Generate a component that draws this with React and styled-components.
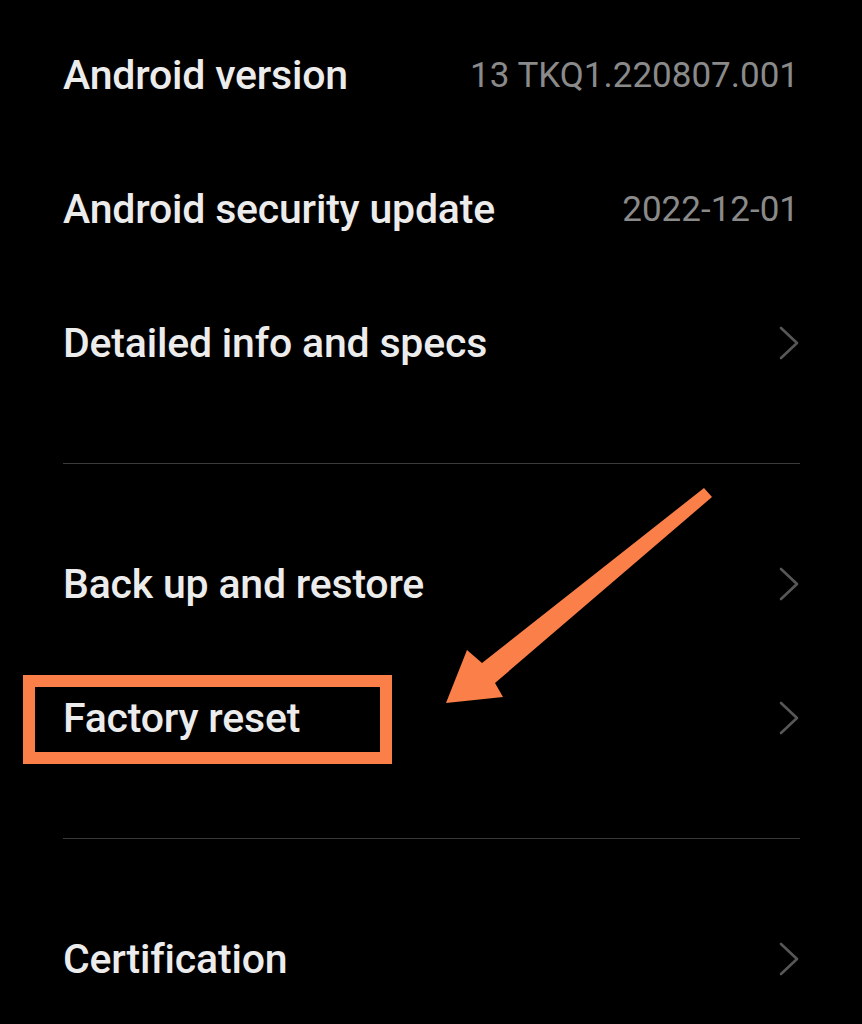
import React from "react";
import styled, { createGlobalStyle } from "styled-components";

const GlobalStyle = createGlobalStyle`
  html, body {
    margin: 0;
    padding: 0;
    background: #000;
  }
  body {
    font-family: Roboto, "Noto Sans", "Liberation Sans", sans-serif;
  }
`;

const sections = [
  [
    { label: "Android version", value: "13 TKQ1.220807.001" },
    { label: "Android security update", value: "2022-12-01" },
    { label: "Detailed info and specs", chevron: true },
  ],
  [
    { label: "Back up and restore", chevron: true },
    { label: "Factory reset", chevron: true },
  ],
  [{ label: "Certification", chevron: true }],
];

function Chevron() {
  return (
    <ChevronSvg width="20" height="34" viewBox="0 0 20 34">
      <polyline
        points="2,2 18,17 2,32"
        fill="none"
        stroke="#575757"
        strokeWidth="2.6"
        strokeLinecap="round"
        strokeLinejoin="round"
      />
    </ChevronSvg>
  );
}

function App() {
  return (
    <>
      <GlobalStyle />
      <Page>
        {sections.map((rows, i) => (
          <Section key={i} $first={i === 0}>
            {rows.map((row) => (
              <Row key={row.label}>
                <Label>{row.label}</Label>
                {row.value && <Value>{row.value}</Value>}
                {row.chevron && <Chevron />}
              </Row>
            ))}
          </Section>
        ))}

        <Highlight />
        <Arrow width="862" height="1024" viewBox="0 0 862 1024">
          <polygon
            points="704,488 712,497 495,683 503,697 446,703 467,650 482,663"
            fill="#fb7f48"
          />
        </Arrow>
      </Page>
    </>
  );
}

export default App;

const Page = styled.div`
  position: relative;
  width: 862px;
  height: 1024px;
  overflow: hidden;
  box-sizing: border-box;
  padding: 8px 62px 0 63px;
  background: #000;
`;

const Section = styled.div`
  display: flex;
  flex-direction: column;
  padding: 53px 0;
  border-top: ${(p) => (p.$first ? "none" : "1.5px solid #3a3a3a")};
  padding-top: ${(p) => (p.$first ? "0" : "53px")};
`;

const Row = styled.div`
  height: 134px;
  display: flex;
  align-items: center;
  justify-content: space-between;
`;

const Label = styled.span`
  color: #ececec;
  font-size: 41px;
  font-weight: 500;
  letter-spacing: -0.2px;
`;

const Value = styled.span`
  color: #8a8a8a;
  font-size: 35px;
  font-weight: 400;
  margin-right: 1px;
`;

const ChevronSvg = styled.svg`
  margin-right: 1px;
  flex-shrink: 0;
`;

const Highlight = styled.div`
  position: absolute;
  left: 23px;
  top: 675px;
  width: 369px;
  height: 89px;
  box-sizing: border-box;
  border: 12px solid #fb7f48;
`;

const Arrow = styled.svg`
  position: absolute;
  left: 0;
  top: 0;
  pointer-events: none;
`;
